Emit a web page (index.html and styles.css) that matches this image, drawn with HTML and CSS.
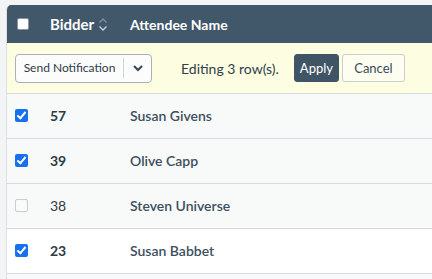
FILE: index.html
```html
<!DOCTYPE html>
<html lang="en">
<head>
    <meta charset="UTF-8">
    <meta name="viewport" content="width=device-width, initial-scale=1.0">
    <title>Attendees</title>
    <link rel="stylesheet" href="styles.css">
</head>
<body>
    <div class="table-card">
        <div class="table-head">
            <div class="col-check"><span class="box box-white"></span></div>
            <div class="col-bidder">Bidder
                <svg class="sort" width="10" height="15" viewBox="0 0 10 15">
                    <path d="M1.5 5.5 L5 2 L8.5 5.5" fill="none" stroke="#7d909e" stroke-width="1.3"/>
                    <path d="M1.5 9.5 L5 13 L8.5 9.5" fill="none" stroke="#c9d3da" stroke-width="1.3"/>
                </svg>
            </div>
            <div class="col-name">Attendee Name</div>
        </div>

        <div class="bulk-bar">
            <div class="split-btn">
                <span class="split-label">Send Notification</span>
                <span class="split-arrow">
                    <svg width="12" height="8" viewBox="0 0 12 8">
                        <path d="M2 2 L6 6 L10 2" fill="none" stroke="#344654" stroke-width="2"/>
                    </svg>
                </span>
            </div>
            <span class="editing">Editing 3 row(s).</span>
            <button class="btn btn-apply" type="button">Apply</button>
            <button class="btn btn-cancel" type="button">Cancel</button>
        </div>

        <div class="row striped">
            <div class="col-check"><span class="box box-checked"></span></div>
            <div class="col-bidder num-bold">57</div>
            <div class="col-name">Susan Givens</div>
        </div>
        <div class="row striped">
            <div class="col-check"><span class="box box-checked"></span></div>
            <div class="col-bidder num-bold">39</div>
            <div class="col-name">Olive Capp</div>
        </div>
        <div class="row striped">
            <div class="col-check"><span class="box box-empty"></span></div>
            <div class="col-bidder">38</div>
            <div class="col-name">Steven Universe</div>
        </div>
        <div class="row">
            <div class="col-check"><span class="box box-checked"></span></div>
            <div class="col-bidder num-bold">23</div>
            <div class="col-name">Susan Babbet</div>
        </div>
        <div class="row striped"></div>
    </div>
</body>
</html>
```

FILE: styles.css
```css
html {
    overflow: hidden;
}
body {
    margin: 0;
    padding: 5px 0 0 6px;
    background-color: #f3f4f6;
    font-family: Lato, "Open Sans", Arial, sans-serif;
    color: #3a4b58;
    overflow: hidden;
    height: 279px;
    box-sizing: border-box;
}
.table-card {
    background-color: #fff;
    border-left: 1px solid #dde1e4;
    border-top-left-radius: 5px;
    overflow: hidden;
}
.table-head {
    display: flex;
    align-items: center;
    height: 38px;
    background-color: #41576a;
    color: #fff;
    font-weight: 700;
    font-size: 15px;
}
.col-check {
    width: 43px;
    padding-left: 8px;
    box-sizing: border-box;
    display: flex;
    align-items: center;
}
.col-bidder {
    width: 80px;
    display: flex;
    align-items: center;
    gap: 4px;
    font-size: 14px;
}
.table-head .col-bidder {
    font-size: 15px;
}
.col-name {
    font-size: 14px;
    font-weight: 600;
}
.table-head .col-name {
    color: #fff;
    font-weight: 700;
}
.box {
    display: inline-block;
    width: 13px;
    height: 13px;
    border-radius: 2px;
    box-sizing: border-box;
}
.box-white {
    width: 12px;
    height: 12px;
    background-color: #fff;
    border: 1px solid #8a97a2;
    margin-left: 2px;
}
.box-checked {
    background-color: #1671ee;
    position: relative;
}
.box-checked::after {
    content: "";
    position: absolute;
    left: 4px;
    top: 1px;
    width: 3px;
    height: 7px;
    border: solid #fff;
    border-width: 0 2px 2px 0;
    transform: rotate(40deg);
}
.box-empty {
    border: 1px solid #c7cdd2;
    background-color: #fafafa;
}
.bulk-bar {
    display: flex;
    align-items: center;
    height: 50px;
    padding-left: 8px;
    background-color: #fdfde2;
    border-bottom: 1px solid #d6dadd;
}
.split-btn {
    display: flex;
    align-items: center;
    height: 29px;
    border: 1px solid #a9b1b7;
    border-radius: 4px;
    background-color: #fcfcfc;
    font-size: 12px;
    color: #2c3b46;
    box-sizing: border-box;
}
.split-label {
    width: 107px;
    text-align: center;
    border-right: 1px solid #cfd4d8;
    line-height: 20px;
}
.split-arrow {
    width: 27px;
    display: flex;
    justify-content: center;
}
.editing {
    margin-left: 29px;
    font-size: 14px;
    color: #2f3f4b;
}
.btn {
    height: 28px;
    font-family: inherit;
    font-size: 13px;
    border-radius: 3px;
    cursor: pointer;
}
.btn-apply {
    margin-left: 15px;
    width: 45px;
    padding: 0;
    background-color: #3f5566;
    color: #fff;
    border: 1px solid #3f5566;
}
.btn-cancel {
    margin-left: 3px;
    width: 63px;
    padding: 0;
    background-color: #fefef0;
    color: #3a4b58;
    border: 1px solid #c8cdd0;
}
.row {
    display: flex;
    align-items: center;
    height: 44px;
    padding-bottom: 1px;
    box-sizing: border-box;
    border-bottom: 1px solid #d6dadd;
    background-color: #fff;
    height: 45px;
}
.row.striped {
    background-color: #f8f9f9;
}
.row .col-bidder {
    color: #2c3b46;
}
.row .col-name {
    color: #3d4f5d;
}
.num-bold {
    font-weight: 700;
}
```
